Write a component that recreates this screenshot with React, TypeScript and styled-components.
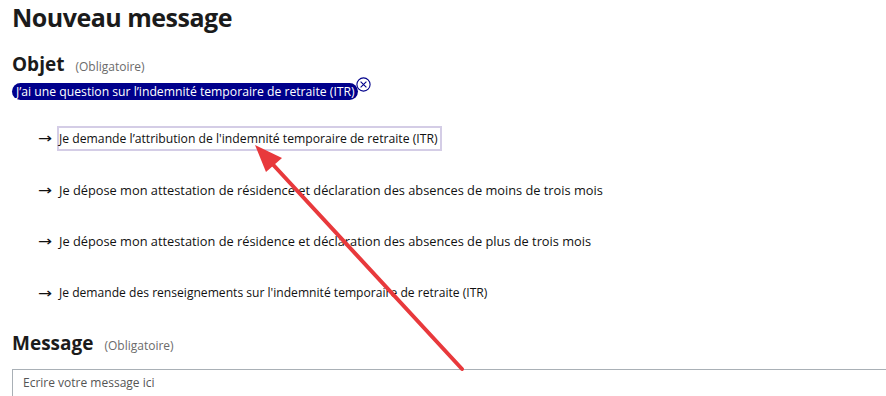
import React from 'react'
import styled, { createGlobalStyle } from 'styled-components'

const GlobalStyle = createGlobalStyle`
  html, body {
    margin: 0;
    padding: 0;
    background: #fff;
  }
  body {
    font-family: 'Open Sans', 'Noto Sans', sans-serif;
    color: #1b1b1b;
  }
`

// the two "dépose" rows are rendered a bit wider in the original
const options = [
  { label: 'Je demande l’attribution de l\'indemnité temporaire de retraite (ITR)', size: 12.2 },
  { label: 'Je dépose mon attestation de résidence et déclaration des absences de moins de trois mois', size: 12.8 },
  { label: 'Je dépose mon attestation de résidence et déclaration des absences de plus de trois mois', size: 12.8 },
  { label: 'Je demande des renseignements sur l\'indemnité temporaire de retraite (ITR)', size: 12.1 },
]

export default function App() {
  return (
    <Page>
      <GlobalStyle />
      <Title>Nouveau message</Title>

      <FieldHead>
        <FieldLabel>Objet</FieldLabel>
        <Required>(Obligatoire)</Required>
      </FieldHead>

      <ChipRow>
        <Chip>J’ai une question sur l’indemnité temporaire de retraite (ITR)</Chip>
        <ChipClose aria-label="Retirer">
          <svg width="15" height="15" viewBox="0 0 15 15">
            <circle cx="7.5" cy="7.5" r="6.6" fill="#fff" stroke="#00008b" strokeWidth="1.1" />
            <path d="M4.6 4.6 L10.4 10.4 M10.4 4.6 L4.6 10.4" stroke="#00008b" strokeWidth="1.1" />
          </svg>
        </ChipClose>
      </ChipRow>

      <OptionList>
        {options.map(({ label, size }, i) => (
          <OptionRow key={label}>
            <Arrow>→</Arrow>
            <OptionText $focused={i === 0} $size={size}>{label}</OptionText>
          </OptionRow>
        ))}
      </OptionList>

      <FieldHead $message>
        <FieldLabel>Message</FieldLabel>
        <Required>(Obligatoire)</Required>
      </FieldHead>

      <MessageBox placeholder="Ecrire votre message ici" />

      <Annotation width="886" height="396" viewBox="0 0 886 396">
        <line x1="462" y1="369" x2="266" y2="157" stroke="#e8393c" strokeWidth="4" strokeLinecap="round" />
        <polygon points="255,145 282,158 266,172" fill="#e8393c" />
      </Annotation>
    </Page>
  )
}

const Page = styled.div`
  position: relative;
  width: 886px;
  height: 396px;
  overflow: hidden;
  padding: 0 0 0 12px;
  box-sizing: border-box;
`

const Title = styled.h1`
  margin: 0;
  padding-top: 1px;
  font-size: 25px;
  font-weight: 700;
  line-height: 32px;
  color: #1b1b1b;
  letter-spacing: -0.5px;
`

const FieldHead = styled.div<{ $message?: boolean }>`
  display: flex;
  align-items: baseline;
  gap: 11px;
  margin-top: ${({ $message }) => ($message ? '25px' : '18px')};
  height: 28px;
`

const FieldLabel = styled.span`
  font-size: 19px;
  font-weight: 700;
  color: #1b1b1b;
`

const Required = styled.span`
  font-size: 12px;
  color: #6b6b6b;
`

const ChipRow = styled.div`
  position: relative;
  display: inline-flex;
  align-items: center;
  margin-top: -2px;
`

const Chip = styled.span`
  display: inline-block;
  background: #00008b;
  color: #fff;
  font-size: 12.2px;
  line-height: 17px;
  padding: 0 3px 0 4px;
  border-radius: 9px;
  white-space: nowrap;
`

const ChipClose = styled.button`
  position: absolute;
  right: -13px;
  top: -6px;
  border: 0;
  padding: 0;
  background: transparent;
  display: flex;
  cursor: pointer;
`

const OptionList = styled.div`
  display: flex;
  flex-direction: column;
  gap: 27.6px;
  margin-top: 25px;
  padding-left: 26px;
`

const OptionRow = styled.div`
  display: flex;
  align-items: center;
  gap: 5px;
  height: 24px;
`

const Arrow = styled.span`
  display: inline-block;
  width: 14px;
  font-family: 'DejaVu Sans', sans-serif;
  font-size: 14px;
  color: #111;
  line-height: 1;
  transform: scaleX(1.2);
  transform-origin: left center;
`

const OptionText = styled.span<{ $focused?: boolean; $size: number }>`
  font-size: ${({ $size }) => $size}px;
  color: #111;
  padding: 2px 2px 2px 0;
  border: 2px solid ${({ $focused }) => ($focused ? '#d4cde6' : 'transparent')};
  white-space: nowrap;
`

const MessageBox = styled.textarea`
  display: block;
  box-sizing: border-box;
  width: 880px;
  height: 60px;
  margin-top: 11px;
  padding: 4px 10px;
  border: 1px solid #a9b0b6;
  resize: none;
  font-family: 'Open Sans', 'Noto Sans', sans-serif;
  font-size: 12px;
  &::placeholder {
    color: #555;
  }
`

const Annotation = styled.svg`
  position: absolute;
  left: 0;
  top: 0;
  pointer-events: none;
`
